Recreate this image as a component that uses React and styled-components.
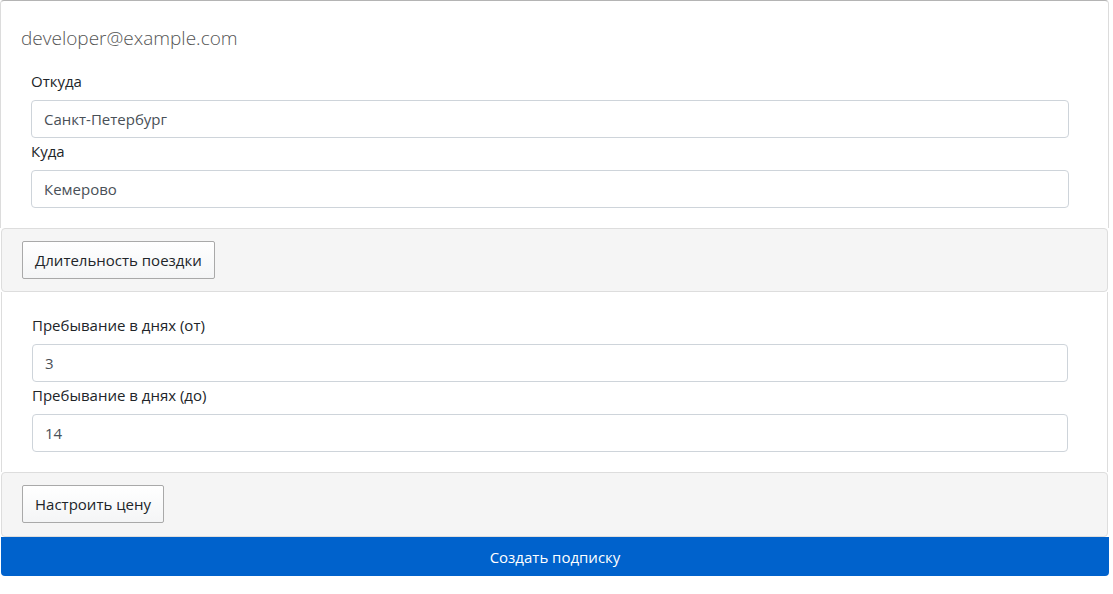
import React from "react";
import styled, { createGlobalStyle } from "styled-components";

const GlobalStyle = createGlobalStyle`
  body {
    margin: 0;
    background: #fff;
    font-family: "Open Sans", "Noto Sans", "Liberation Sans", sans-serif;
    color: #212529;
  }
`;

const Wrapper = styled.div`
  width: 1110px;
  display: flex;
  flex-direction: column;
`;

const TopPanel = styled.div`
  border: 1px solid #dcdcdc;
  border-top: 1px solid #b4b4b4;
  border-bottom: none;
  border-radius: 4px 4px 0 0;
  padding: 24px 0 19px 20px;
  margin-right: 1px;
`;

const Email = styled.div`
  font-size: 19px;
  font-weight: 300;
  color: #555;
  line-height: 27px;
  margin-bottom: 17px;
`;

const Fields = styled.div`
  padding: ${(p) => p.$pad || "0 39px 0 10px"};
`;

const Group = styled.div`
  display: flex;
  flex-direction: column;
`;

const Label = styled.label`
  font-size: 15px;
  line-height: 24px;
  margin: 0 0 7px;
  color: #212529;
`;

const Input = styled.input`
  height: 38px;
  box-sizing: border-box;
  border: 1px solid #ced4da;
  border-radius: 4px;
  padding: 6px 12px;
  font-family: inherit;
  font-size: 15px;
  color: #495057;
  background: #fff;
  margin-bottom: 1px;
  outline: none;
`;

const Toolbar = styled.div`
  background: #f5f5f5;
  border: 1px solid #dddddd;
  border-radius: 4px;
  padding: 12px 20px ${(p) => (p.$last ? "13px" : "12px")};
  margin: 0 2px 0 1px;
  display: flex;
`;

const ToggleButton = styled.button`
  height: 38px;
  padding: 0 12px;
  font-family: inherit;
  font-size: 15px;
  color: #212529;
  background: linear-gradient(#ffffff, #f4f5f6);
  border: 1px solid #a9a9a9;
  border-radius: 2px;
`;

const Body = styled.div`
  border: 1px solid #dddddd;
  border-top: none;
  border-bottom: none;
  margin: 0 2px 0 1px;
  padding: 21px 0 19px;
`;

const Submit = styled.button`
  height: 39px;
  margin: 0 1px;
  border: none;
  border-radius: 0 0 4px 4px;
  background: #0062cc;
  color: #fff;
  font-family: inherit;
  font-size: 15px;
`;

const Field = ({ label, value }) => (
  <Group>
    <Label>{label}</Label>
    <Input defaultValue={value} />
  </Group>
);

export default function App() {
  return (
    <Wrapper>
      <GlobalStyle />
      <TopPanel>
        <Email>developer@example.com</Email>
        <Fields>
          <Field label="Откуда" value="Санкт-Петербург" />
          <Field label="Куда" value="Кемерово" />
        </Fields>
      </TopPanel>
      <Toolbar>
        <ToggleButton>Длительность поездки</ToggleButton>
      </Toolbar>
      <Body>
        <Fields $pad="0 39px 0 30px">
          <Field label="Пребывание в днях (от)" value="3" />
          <Field label="Пребывание в днях (до)" value="14" />
        </Fields>
      </Body>
      <Toolbar $last>
        <ToggleButton>Настроить цену</ToggleButton>
      </Toolbar>
      <Submit>Создать подписку</Submit>
    </Wrapper>
  );
}
